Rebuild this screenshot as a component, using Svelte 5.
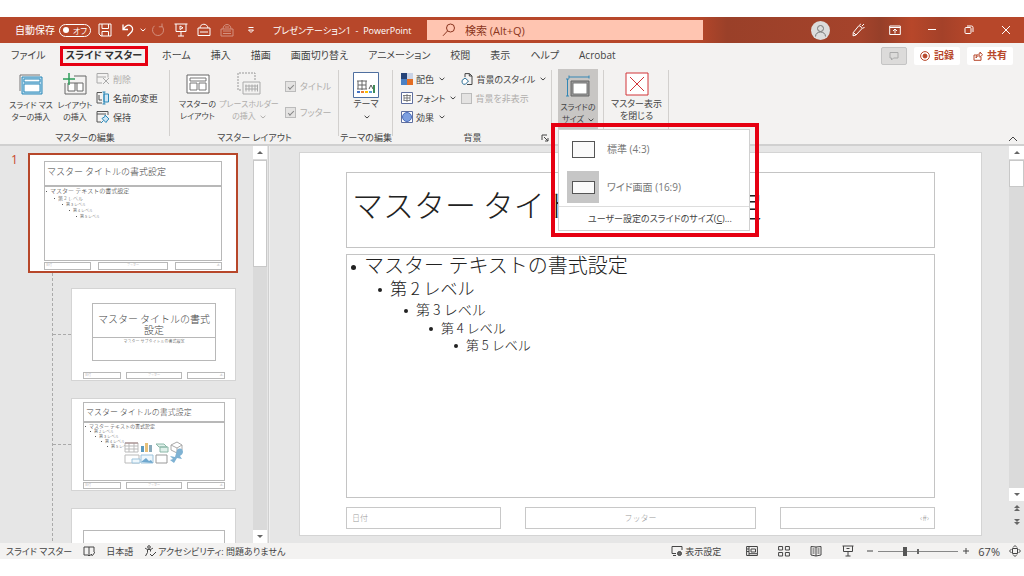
<script>
    const tabs = ['ファイル', 'スライド マスター', 'ホーム', '挿入', '描画', '画面切り替え', 'アニメーション', '校閲', '表示', 'ヘルプ', 'Acrobat'];
    const levels = ['マスター テキストの書式設定', '第 2 レベル', '第 3 レベル', '第 4 レベル', '第 5 レベル'];

    let activeTab = $state('スライド マスター');
    let menuOpen = $state(true);
    let size = $state('wide');
    let zoom = $state(32);
</script>

{#snippet chevron()}
    <svg class="chevron" viewBox="0 0 6 4" width="6" height="4"><path d="M.6.8 3 3 5.4.8" /></svg>
{/snippet}

{#snippet levelList()}
    <ul class="levels">
        {#each levels as level, i}
            <li class="l{i + 1}">{level}</li>
        {/each}
    </ul>
{/snippet}

{#snippet footers()}
    <div class="footers">
        <span>日付</span>
        <span>フッター</span>
        <span>‹#›</span>
    </div>
{/snippet}

<div class="page">
    <header class="titlebar">
        <div class="quick">
            <span class="autosave">自動保存</span>
            <button class="toggle" role="switch" aria-checked="false" aria-label="自動保存"><i></i>オフ</button>
            <button class="save" aria-label="保存">
                <svg viewBox="0 0 14 14" width="14" height="14"><path d="M1 1h12v12H3l-2-2zM4 1v4.500h6.500V1M4 13V8.500h6.500V13" /></svg>
            </button>
            <button class="undo" aria-label="元に戻す">
                <svg viewBox="0 0 14 14" width="14" height="14"><path stroke-width="1.300" d="M2 1.500v5h5M2.300 6.200C5 2 8 1.500 10 3c2.500 2 2 5-.5 7L6.500 13" /></svg>
            </button>
            <button class="more" aria-label="元に戻すの一覧">{@render chevron()}</button>
            <button class="redo faded" aria-label="やり直し">
                <svg viewBox="0 0 14 14" width="14" height="14"><path d="M3.500 2.800a5.500 5.500 0 1 0 7.500.4M11 .5v3.300H7.800" /></svg>
            </button>
            <button aria-label="最初から開始">
                <svg viewBox="0 0 14 14" width="14" height="14"><path d="M.5 1h13M2 1v7.500h10V1M7 8.500V13M4 13h6M6 3v3.500L9 4.800z" /></svg>
            </button>
            <button aria-label="クイック印刷">
                <svg viewBox="0 0 14 14" width="14" height="14"><path d="M3 5c0-5 7.500-5 8 0M1 5h12v7.500H1zM3 9h8" /></svg>
            </button>
            <button class="faded" aria-label="ファイルの共有">
                <svg viewBox="0 0 14 14" width="14" height="14"><path d="M3 6c0-6 8-6 8 0M1 6h12v7H1zM3 8h8M3 10.500h8M5 4h4" /></svg>
            </button>
            <button class="customize" aria-label="クイック アクセス ツール バーのカスタマイズ">
                <svg viewBox="0 0 8 8" width="8" height="8"><path d="M1.500 1.500h5M1.500 4h5L4 6.500z" /></svg>
            </button>
            <h1>プレゼンテーション1&nbsp; -&nbsp; PowerPoint</h1>
        </div>
        <label class="search">
            <svg viewBox="0 0 14 14" width="14" height="14"><circle cx="8.500" cy="5" r="4" /><path d="M5.500 8 1 12.800" /></svg>
            <input type="search" placeholder="検索 (Alt+Q)" aria-label="検索" />
        </label>
        <div class="window-tools">
            <button class="avatar" aria-label="アカウント">
                <svg viewBox="0 0 19 19" width="19" height="19"><circle cx="9.500" cy="7.500" r="3" /><path d="M4.500 15.500c0-6 10-6 10 0" /></svg>
            </button>
            <button aria-label="描画ツール">
                <svg viewBox="0 0 14 14" width="14" height="14"><path d="M8 2.500 11.500 5 5 12l-3 .8.300-3.300zM2.500 9.500 5 12M9.500.8 9 2M13 1l-2 2M13.500 4.500 12 5" /></svg>
            </button>
            <button aria-label="リボンの表示オプション">
                <svg viewBox="0 0 12 12" width="12" height="12"><path d="M.7 2h10.600v8.500H.7zM.7 3.500h10.600M6 9.500V5.500M4 7l2-2 2 2" /></svg>
            </button>
            <button aria-label="最小化"><svg viewBox="0 0 10 10" width="10" height="10"><path d="M1 4.500h8" /></svg></button>
            <button aria-label="元に戻す (縮小)">
                <svg viewBox="0 0 10 10" width="10" height="10"><rect x="1" y="2.500" width="6" height="6" rx="1" /><path d="M3 1h4.500q1.500 0 1.500 1.500V7" /></svg>
            </button>
            <button aria-label="閉じる"><svg viewBox="0 0 10 10" width="10" height="10"><path d="m1 1 8 8M9 1 1 9" /></svg></button>
        </div>
    </header>

    <nav class="tabs">
        {#each tabs as tab}
            <button class:active={tab === activeTab} onclick={() => (activeTab = tab)}>{tab}</button>
        {/each}
        <div class="tab-actions">
            <button class="comment" aria-label="コメント">
                <svg viewBox="0 0 10 10" width="10" height="10"><path d="M1 1.500h8v5.500H4.500L2.500 9V7H1z" /></svg>
            </button>
            <button class="record">
                <svg viewBox="0 0 10 10" width="10" height="10"><circle cx="5" cy="5" r="4.400" /><circle cx="5" cy="5" r="2" fill="currentColor" /></svg>記録
            </button>
            <button class="share">
                <svg viewBox="0 0 10 10" width="10" height="10"><path d="M4 4H1v5.300h7V6M3 7c0-3 2-4 4-4V1l2.500 2.800L7 6.300V4.800C5 4.800 4 5 3 7z" /></svg>共有
            </button>
        </div>
    </nav>

    <section class="ribbon">
        <div class="group g-edit">
            <div class="items">
                <button class="big w-slide">
                    <svg viewBox="0 0 24 24" width="24" height="24"><path d="M1 18V2h20" stroke="#777" /><path d="M3 4h20v17H3z" fill="#b9dcef" stroke="#2b88b8" /><path d="M5 6h16v3H5zM5 11h16v8H5z" fill="#fff" stroke="#2b88b8" /></svg>
                    スライド マス<br />ターの挿入
                </button>
                <button class="big w-layout">
                    <svg viewBox="0 0 24 24" width="24" height="24"><path d="M11 3h12v18H2V10" stroke="#666" fill="none" /><path d="M5 10h15M5 10v8h7v-8M14 10v8h6v-8" stroke="#666" fill="#fff" /><path d="M6 0v12M0 6h12" stroke="#2e9e5b" stroke-width="1.500" /></svg>
                    レイアウト<br />の挿入
                </button>
                <div class="stack">
                    <button class="small" disabled>
                        <svg viewBox="0 0 14 14" width="14" height="14"><path d="M1 1.500h11v4M1 1.500V11h5M1 5h9" stroke="#aaa" /><path d="m7 6 6 6M13 6l-6 6" stroke="#aaa" /></svg>削除
                    </button>
                    <button class="small">
                        <svg viewBox="0 0 14 14" width="14" height="14"><path d="M6 1.500H1V12h5M3 4v5h3" stroke="#555" /><path d="M8 3h4.500v8H8z" stroke="#2b88b8" fill="#cfe6f4" /><path d="M6.500 1h3M8 1v12M6.500 13h3" stroke="#2b88b8" /></svg>名前の変更
                    </button>
                    <button class="small">
                        <svg viewBox="0 0 14 14" width="14" height="14"><path d="M12 5V1.500H1V12h4M1 4h9" stroke="#555" /><path d="m9 5 4 4-1 .5-2 3-4-4 3-2zM7.500 10.500 5 13" stroke="#2b88b8" fill="#cfe6f4" /></svg>保持
                    </button>
                </div>
            </div>
            <h2>マスターの編集</h2>
        </div>

        <div class="group g-layout">
            <div class="items">
                <button class="big w-master">
                    <svg viewBox="0 0 24 24" width="24" height="24"><path d="M1 3h22v18H1z" stroke="#666" fill="#fff" /><path d="M4 6h16v3H4zM4 11h7v7H4zM13 11h7v7h-7z" stroke="#777" fill="#fff" /></svg>
                    マスターの<br />レイアウト
                </button>
                <button class="big w-holder" disabled>
                    <svg viewBox="0 0 24 24" width="24" height="24"><path d="M18 8V1H1v17h4" stroke="#999" stroke-dasharray="2 1" /><path d="M6 10h17v12H6zM9 12.500v7M12 12.500v7M15 12.500v7M18 12.500v7M20.500 12.500v7M8 14h13M8 17h13" stroke="#aaa" /></svg>
                    プレースホルダー<br />の挿入 {@render chevron()}
                </button>
                <div class="checks">
                    <label><input type="checkbox" checked disabled />タイトル</label>
                    <label><input type="checkbox" checked disabled />フッター</label>
                </div>
            </div>
            <h2>マスター レイアウト</h2>
        </div>

        <div class="group g-theme">
            <div class="items">
                <button class="big">
                    <svg viewBox="0 0 26 26" width="26" height="26"><path d="M.5.5h25v25H.5z" stroke="#4f6f9f" fill="#fff" /><path d="M4 9h10M4 17h10M5 9v8M9 8v10M13 9v8M5 13h8" stroke="#666" /><path d="m16 17 2-4 2 4" stroke="#555" /><path d="M4 20h3" stroke="#4472c4" stroke-width="2" /><path d="M8 20h3" stroke="#ed7d31" stroke-width="2" /><path d="M12 20h3" stroke="#ffc000" stroke-width="2" /><path d="M16 20h3" stroke="#5b9bd5" stroke-width="2" /><path d="M21 13v8" stroke="#3d8b57" stroke-width="2" /></svg>
                    テーマ<br />{@render chevron()}
                </button>
            </div>
            <h2>テーマの編集</h2>
        </div>

        <div class="group g-back">
            <div class="items">
                <div class="stack">
                    <button class="small">
                        <svg viewBox="0 0 12 12" width="12" height="12"><path d="M0 0h6v12H0z" fill="#264478" stroke="none" /><path d="M6 0h6v6H6z" fill="#c9d3e6" stroke="none" /><path d="M6 6h6v6H6z" fill="#e36c22" stroke="none" /><path d="M0 6h6v6H0z" fill="#4a80c4" stroke="none" /></svg>配色 {@render chevron()}
                    </button>
                    <button class="small">
                        <svg viewBox="0 0 12 12" width="12" height="12"><path d="M.5.5h11v11H.5z" stroke="#5f6f9f" fill="#fff" /><path d="M2 3.500h8M2.500 8.500h7M3 3.500v5M6 2v8M9 3.500v5M3 6h6" stroke="#666" stroke-width=".8" /></svg>フォント {@render chevron()}
                    </button>
                    <button class="small">
                        <svg viewBox="0 0 12 12" width="12" height="12"><path d="M.5.5h11v11H.5z" stroke="#5f6f9f" fill="#fff" /><circle cx="6" cy="6" r="4.500" fill="#7d9fe0" stroke="#4a6dbb" /></svg>効果 {@render chevron()}
                    </button>
                </div>
                <div class="stack">
                    <button class="small">
                        <svg viewBox="0 0 12 12" width="12" height="12"><path d="M4 4V.6h4.500L11 3v8.500H6M8.300.8V3H11" stroke="#444" /><path d="M1 7.500 4 5l3.500 3-3 3.200c-3 .6-3.500-1-3.500-3.700z" stroke="#2b6f98" fill="#fff" /></svg>背景のスタイル {@render chevron()}
                    </button>
                    <label class="hide-bg"><input type="checkbox" disabled />背景を非表示</label>
                </div>
            </div>
            <h2>背景</h2>
            <button class="launcher" aria-label="背景の書式設定">
                <svg viewBox="0 0 8 8" width="8" height="8"><path d="M1 6V1h5M3 3l4 4M7 4v3H4" /></svg>
            </button>
        </div>

        <div class="group g-size">
            <button class="big size-button" class:open={menuOpen} aria-expanded={menuOpen} onclick={() => (menuOpen = !menuOpen)}>
                <svg viewBox="0 0 24 24" width="24" height="24"><path d="M5 6h18v15H5z" stroke="#666" fill="#999" /><path d="M7 8h14v11H7z" fill="#fff" stroke="#777" /><path d="M3 2h20M3 .5v3M23 .5v3M1.500 4v17M0 4h3M0 21h3" stroke="#3487b5" /></svg>
                スライドの<br />サイズ {@render chevron()}
            </button>
            {#if menuOpen}
                <div class="callout">
                    <div class="menu" role="menu">
                        <button role="menuitemradio" aria-checked={size === 'standard'} onclick={() => (size = 'standard')}>
                            <span class="ratio"><i class="standard"></i></span>標準 (4:3)
                        </button>
                        <button role="menuitemradio" aria-checked={size === 'wide'} onclick={() => (size = 'wide')}>
                            <span class="ratio"><i></i></span>ワイド画面 (16:9)
                        </button>
                        <button class="custom" role="menuitem">ユーザー設定のスライドのサイズ(<u>C</u>)...</button>
                    </div>
                </div>
            {/if}
        </div>

        <div class="group g-close">
            <button class="big">
                <svg viewBox="0 0 24 24" width="24" height="24"><path d="M1 1h22v22H1z" stroke="#d13438" fill="#fff" /><path d="m5 5 14 14M19 5 5 19" stroke="#d13438" /></svg>
                マスター表示<br />を閉じる
            </button>
        </div>
        <button class="collapse" aria-label="リボンを折りたたむ">
            <svg viewBox="0 0 10 6" width="10" height="6"><path d="m1 5 4-4 4 4" /></svg>
        </button>
    </section>

    <main class="workspace">
        <aside class="thumbs">
            <div class="thumb-list">
                <div class="master-row">
                    <span class="number">1</span>
                    <div class="mini master">
                        <div class="box title">マスター タイトルの書式設定</div>
                        <div class="box body">{@render levelList()}</div>
                        {@render footers()}
                    </div>
                </div>
                <ul class="layouts">
                    <li>
                        <div class="mini cover">
                            <div class="box title">マスター タイトルの書式設定</div>
                            <div class="box body">マスター サブタイトルの書式設定</div>
                            {@render footers()}
                        </div>
                    </li>
                    <li>
                        <div class="mini content">
                            <div class="box title">マスター タイトルの書式設定</div>
                            <div class="box body">
                                {@render levelList()}
                                <svg class="content-icons" viewBox="0 0 60 24" width="60" height="24">
                                    <path d="M1 2h13v9H1zM5 2v9M10 2v9M1 5h13M1 8h13M1 14h14v8H1z" stroke="#bbb" fill="#fff" />
                                    <path d="M1 2h13" stroke="#a08080" />
                                    <path d="M17 5h3v6h-3z" fill="#5b9bbf" stroke="none" /><path d="M21 2h3v9h-3z" fill="#e6c07a" stroke="none" /><path d="M25 4h3v7h-3z" fill="#8ab" stroke="none" />
                                    <path d="M32 3h8l3 3h-8zM36 6h8v5h-8z" stroke="#8cb8a8" fill="#dff0ea" />
                                    <path d="m47 4 6-3 5 3v5l-5 3-6-3zM47 4l6 3 5-3M53 7v5" stroke="#aaa" fill="#fff" />
                                    <path d="M8 18h8v4H8zM17 14h12v8H17z" stroke="#9cc3dc" fill="#eef7fc" /><path d="m17 21 5-4 3 3 2-1 2 3z" fill="#6fa8cf" stroke="none" />
                                    <path d="M32 14h11v8H32z" stroke="#999" fill="#fff" />
                                    <path d="M53 9c3-3 6-1 6 2 0 2-2 3-3 4l2 3-5-1-3 5-4-3 3-1-3-3 5 1z" fill="#7fb2d3" stroke="none" />
                                </svg>
                            </div>
                            {@render footers()}
                        </div>
                    </li>
                    <li>
                        <div class="mini section"><div class="box body"></div></div>
                    </li>
                </ul>
            </div>
            <div class="scrollbar">
                <button aria-label="上へ"><i class="up"></i></button>
                <div class="track"><div class="grip"></div></div>
                <button aria-label="下へ"><i class="down"></i></button>
            </div>
        </aside>

        <div class="editor">
            <article class="slide">
                <div class="box title">マスター タイトルの書式設定</div>
                <div class="box body">{@render levelList()}</div>
                {@render footers()}
            </article>
        </div>
        <div class="scrollbar main-scroll">
            <button aria-label="上へ"><i class="up"></i></button>
            <div class="track"><div class="grip"></div></div>
            <button aria-label="下へ"><i class="down"></i></button>
            <button class="jump" aria-label="前のスライド"><i class="up"></i><i class="up"></i></button>
            <button class="jump" aria-label="次のスライド"><i class="down"></i><i class="down"></i></button>
        </div>
    </main>

    <footer class="status">
        <span>スライド マスター</span>
        <button aria-label="スペル チェック">
            <svg viewBox="0 0 12 12" width="12" height="12"><path d="M6 2v9M6 2H1v8h4l1 1 1-1h2M6 2h5v5M8 9l1.500 1.500L12 7" /></svg>
        </button>
        <button>日本語</button>
        <button class="a11y">
            <svg viewBox="0 0 12 12" width="12" height="12"><circle cx="5" cy="2" r="1.300" /><path d="M1 3c2 2 6 2 8 0M3.500 4.500v3L1.500 11M6.500 4.500v2M6 9l2 2 4-4" /></svg>アクセシビリティ: 問題ありません
        </button>
        <div class="views">
            <button class="display">
                <svg viewBox="0 0 12 12" width="12" height="12"><path d="M5 8.500H1v-7h10V5M2 10.500h3" /><circle cx="8.500" cy="8.500" r="2" fill="#666" /></svg>表示設定
            </button>
            <button aria-label="標準"><svg viewBox="0 0 12 12" width="12" height="12"><path d="M.6 1.500h10.800v9H.6zM3 1.500v9M5 4h4.500v3H5zM3 8.700h8M1 4h2M1 6.500h2" /></svg></button>
            <button aria-label="スライド一覧"><svg viewBox="0 0 12 12" width="12" height="12"><path d="M.6 1.500h4v3.500h-4zM7.400 1.500h4v3.500h-4zM.6 7.500h4V11h-4zM7.400 7.500h4V11h-4z" /></svg></button>
            <button aria-label="閲覧表示"><svg viewBox="0 0 12 12" width="12" height="12"><path d="M6 2v9M6 2 1 1.500V10l5 1 5-1V1.500zM2.500 4h2M2.500 6h2M2.500 8h2M7.500 4h2M7.500 6h2M7.500 8h2" /></svg></button>
            <button aria-label="スライド ショー"><svg viewBox="0 0 12 12" width="12" height="12"><path d="M.5 1h11M1.500 1v5.500h9V1M6 6.500V11M3.500 11h5M4.500 3.500h3" /></svg></button>
        </div>
        <div class="zoom">
            <button aria-label="縮小"><svg viewBox="0 0 6 6" width="6" height="6"><path d="M0 3h6" /></svg></button>
            <input type="range" min="0" max="100" bind:value={zoom} aria-label="ズーム" />
            <button aria-label="拡大"><svg viewBox="0 0 6 6" width="6" height="6"><path d="M0 3h6M3 0v6" /></svg></button>
            <span>67%</span>
            <button aria-label="ウィンドウに合わせる">
                <svg viewBox="0 0 12 12" width="12" height="12"><path d="M3.500 3.500h5v5h-5zM4 2.500l2-2 2 2M4 9.500l2 2 2-2M2.500 4l-2 2 2 2M9.500 4l2 2-2 2" /></svg>
            </button>
        </div>
    </footer>
</div>

<style>
    :global(body){
        margin: 0;
        background: #fff;
    }

    .page{
        display: flex;
        flex-direction: column;
        height: 100vh;
        box-sizing: border-box;
        padding: 17px 0;
        overflow: hidden;
        font-family: "Open Sans", "Noto Sans CJK JP", sans-serif;
        font-feature-settings: "palt";
        font-size: 9px;
        line-height: 13px;
        color: #444;
    }

    button, input{
        font: inherit;
        font-feature-settings: inherit;
        color: inherit;
        background: none;
        border: 0;
        padding: 0;
        margin: 0;
    }

    button{
        display: flex;
        align-items: center;
        justify-content: center;
        white-space: nowrap;
    }

    svg{
        flex: none;
        fill: none;
        stroke: currentColor;
        stroke-width: 1;
    }

    ul{
        list-style: none;
        margin: 0;
        padding: 0;
    }

    h1, h2{
        margin: 0;
        font-size: inherit;
        font-weight: 400;
    }

    .chevron{
        vertical-align: middle;
        margin-left: 2px;
    }

    /* title bar */
    .titlebar{
        display: grid;
        grid-template-columns: 427px 27% 1fr;
        align-items: center;
        height: 26px;
        flex: none;
        font-size: 10px;
        color: #fff;
        background: linear-gradient(90deg, #b7472a 68%, #9a4029 71%, #a5432b 84%, #963f29 86%, #b7472a 89%, #a44129 92%, #b7472a 95%);
    }

    .quick{
        display: flex;
        align-items: center;
        padding-left: 15px;
        white-space: nowrap;
    }

    .quick h1{
        font-size: 9px;
    }

    .quick button{
        margin-right: 9px;
    }

    .quick .toggle{
        width: 32px;
        height: 13px;
        box-sizing: border-box;
        margin: 0 7px 0 4px;
        gap: 4px;
        border: 1px solid #fff;
        border-radius: 7px;
        font-size: 8px;
    }

    .toggle i{
        width: 6px;
        height: 6px;
        border-radius: 50%;
        background: #fff;
    }

    .quick .undo{
        margin-right: 3px;
    }

    .quick .more{
        margin-right: 5px;
    }

    .faded{
        opacity: .4;
    }

    .quick .customize{
        margin: 0 18px 0 4px;
    }

    .search{
        display: flex;
        align-items: center;
        height: 20px;
        padding-left: 15px;
        gap: 9px;
        background: #ffc5b1;
        color: #8a3520;
    }

    .search input{
        flex: 1;
        min-width: 0;
        font-size: 11px;
        outline: 0;
    }

    .search input::placeholder{
        color: #8a3520;
        opacity: 1;
    }

    .window-tools{
        display: flex;
        align-items: center;
        justify-content: flex-end;
    }

    .window-tools button{
        width: 37px;
    }

    .avatar svg{
        border-radius: 50%;
        background: #dcdcdc;
        color: #777;
    }

    /* tabs */
    .tabs{
        display: flex;
        align-items: center;
        flex: none;
        height: 25px;
        padding-left: 8px;
        gap: 14px;
        background: #f3f2f1;
        font-size: 10px;
    }

    .tabs > button{
        height: 14px;
        padding: 0 3px;
    }

    .tabs > .active{
        font-weight: 700;
        outline: 3px solid #e60012;
        color: #333;
    }

    .tab-actions{
        display: flex;
        gap: 7px;
        margin-left: auto;
        padding-right: 11px;
        color: #b7472a;
        font-weight: 700;
    }

    .tab-actions button{
        width: 46px;
        height: 18px;
        gap: 4px;
        background: #fff;
        border-radius: 2px;
    }

    .tab-actions .comment{
        width: 26px;
        box-sizing: border-box;
        background: #dcdbda;
        border: 1px solid #c4c4c4;
        color: #aaa;
    }

    /* ribbon */
    .ribbon{
        display: flex;
        flex: none;
        height: 76px;
        position: relative;
        background: #f3f2f1;
        border-bottom: 2px solid #d0d0d0;
    }

    .group{
        display: flex;
        flex-direction: column;
        justify-content: space-between;
        position: relative;
        box-sizing: border-box;
        flex: none;
        padding-top: 4px;
    }

    .group::after{
        content: "";
        position: absolute;
        right: 0;
        top: 2px;
        bottom: 8px;
        border-right: 1px solid #d2d0ce;
    }

    .g-edit{
        width: 170px;
    }

    .g-layout{
        width: 169px;
    }

    .g-theme{
        width: 54px;
    }

    .g-back{
        width: 159px;
    }

    .g-size{
        width: 52px;
        padding: 1px 6px 0;
    }

    .g-close{
        width: 65px;
    }

    .items{
        display: flex;
        justify-content: center;
    }

    .g-edit .items, .g-back .items, .g-layout .items{
        justify-content: flex-start;
        padding-left: 8px;
    }

    h2{
        text-align: center;
        white-space: nowrap;
    }

    .big{
        display: block;
        text-align: center;
        font-size: 8px;
        line-height: 12px;
    }

    .g-theme .big, .g-close .big{
        font-size: 9px;
    }

    .big > svg:first-child{
        display: block;
        margin: 0 auto 2px;
    }

    .g-theme .big > svg:first-child{
        margin-bottom: 0;
    }

    .w-slide{
        width: 46px;
    }

    .w-layout{
        width: 42px;
    }

    .w-master{
        width: 39px;
    }

    .w-holder{
        width: 64px;
    }

    .stack{
        display: flex;
        flex-direction: column;
        align-items: flex-start;
        gap: 5px;
    }

    .g-back .stack + .stack{
        padding-left: 5px;
    }

    .small, .hide-bg{
        display: flex;
        align-items: center;
        height: 14px;
        gap: 3px;
        white-space: nowrap;
    }

    button:disabled, .checks, .hide-bg{
        color: #b0aeac;
    }

    .checks{
        display: flex;
        flex-direction: column;
        gap: 13px;
        padding: 8px 0 0 4px;
    }

    .checks label{
        display: flex;
        align-items: center;
        gap: 4px;
        white-space: nowrap;
    }

    input[type="checkbox"]{
        appearance: none;
        box-sizing: border-box;
        width: 11px;
        height: 11px;
        border: 1px solid #bbb;
        background: #e4e3e2;
        display: grid;
        place-items: center;
    }

    input[type="checkbox"]:checked::before{
        content: "";
        width: 5px;
        height: 2px;
        border: solid #888;
        border-width: 0 0 1px 1px;
        transform: rotate(-45deg);
    }

    .launcher{
        position: absolute;
        right: 3px;
        bottom: 2px;
    }

    .size-button{
        width: 40px;
        height: 60px;
    }

    .size-button.open{
        background: #c8c6c4;
    }

    .size-button > svg:first-child{
        margin-top: 2px;
    }

    .collapse{
        position: absolute;
        right: 6px;
        bottom: 2px;
    }

    .callout{
        position: absolute;
        z-index: 2;
        left: -1px;
        top: 55px;
        border: 4px solid #e60012;
        padding: 2px 5px 2px 3px;
    }

    .menu{
        width: 192px;
        box-sizing: border-box;
        border: 1px solid #d0d0d0;
        background: #fff;
        font-size: 10px;
        color: #777;
    }

    .menu button{
        width: 100%;
        height: 38px;
        padding-left: 8px;
        gap: 8px;
        justify-content: flex-start;
    }

    .menu .custom{
        height: 24px;
        gap: 0;
        padding-left: 29px;
        border-top: 1px solid #ddd;
        font-size: 9px;
        color: #444;
    }

    .ratio{
        display: grid;
        place-items: center;
        width: 32px;
        height: 32px;
    }

    .ratio i{
        width: 21px;
        height: 11px;
        border: 1px solid #555;
        background: #fafafa;
    }

    .ratio .standard{
        height: 15px;
    }

    [aria-checked="true"] .ratio{
        background: #c6c6c6;
    }

    /* workspace */
    .workspace{
        display: flex;
        flex: 1;
        min-height: 0;
        background: #e6e6e6;
    }

    .thumbs{
        display: flex;
        flex: none;
        width: 269px;
        box-sizing: border-box;
        border-right: 1px solid #d0d0d0;
    }

    .thumb-list{
        flex: 1;
        overflow: hidden;
        padding-top: 7px;
    }

    .master-row{
        display: flex;
    }

    .number{
        width: 17px;
        padding-left: 11px;
        font-size: 12px;
        color: #c8472a;
    }

    .box{
        border: 1px solid #c4c4c4;
        box-sizing: border-box;
    }

    .slide, .mini{
        display: flex;
        flex-direction: column;
        box-sizing: border-box;
        background: #fff;
        border: 1px solid #d4d4d4;
        font-family: "Noto Sans CJK JP", sans-serif;
        font-feature-settings: normal;
        font-weight: 300;
    }

    .mini{
        width: 165px;
        height: 93px;
        padding: 3px 10px 1px 11px;
    }

    .mini .box{
        border-color: #b8b8b8;
    }

    .mini .title{
        height: 20px;
        padding-left: 2px;
        font-size: 8px;
        line-height: 17px;
        white-space: nowrap;
    }

    .mini .body{
        flex: 1;
        min-height: 0;
        position: relative;
    }

    .mini.master{
        width: 210px;
        height: 120px;
        padding: 6px 14px 1px;
        border: 2px solid #b7472a;
    }

    .master .title{
        height: 25px;
        font-size: 9px;
        line-height: 20px;
    }

    .levels li::before{
        content: "";
        display: inline-block;
        vertical-align: middle;
        border-radius: 50%;
        background: #222;
    }

    .mini .levels{
        font-size: 4px;
        line-height: 5px;
        color: #555;
    }

    .mini .levels li{
        white-space: nowrap;
    }

    .mini .levels li::before{
        width: 1px;
        height: 1px;
        margin: 0 3px 0 1px;
    }

    .mini .l1{
        font-size: 5px;
        line-height: 6px;
        color: #222;
    }

    .master .levels{
        line-height: 6px;
    }

    .master .l1{
        font-size: 6px;
        line-height: 8px;
    }

    .mini .l2{
        padding-left: 5px;
    }

    .mini .l3{
        padding-left: 10px;
    }

    .mini .l4{
        padding-left: 16px;
    }

    .mini .l5{
        padding-left: 22px;
    }

    .master .l2{
        padding-left: 8px;
        font-size: 5px;
    }

    .master .l3{
        padding-left: 16px;
    }

    .master .l4{
        padding-left: 23px;
    }

    .master .l5{
        padding-left: 30px;
    }

    .footers{
        display: grid;
        grid-template-columns: 155fr 231fr 155fr;
    }

    .footers span{
        box-sizing: border-box;
        border: 1px solid #c8c8c8;
        color: #999;
    }

    .footers span:nth-child(2){
        text-align: center;
    }

    .footers span:last-child{
        text-align: right;
    }

    .mini .footers{
        column-gap: 5px;
        margin-top: 1px;
        font-size: 3px;
        line-height: 4px;
    }

    .mini .footers span{
        height: 7px;
        padding: 0 1px;
        border-color: #b8b8b8;
    }

    .master .footers{
        column-gap: 7px;
    }

    .master .footers span{
        height: 8px;
    }

    .layouts{
        margin-left: 52px;
        padding: 15px 0 0 18px;
        border-left: 1px dashed #aaa;
    }

    .layouts > li{
        position: relative;
        margin-bottom: 17px;
    }

    .layouts > li::before{
        content: "";
        position: absolute;
        left: -18px;
        top: 46px;
        width: 18px;
        border-top: 1px dashed #aaa;
    }

    .cover{
        padding-top: 14px;
    }

    .cover .title, .cover .body{
        margin: 0 9px;
        padding: 0;
        text-align: center;
        white-space: normal;
    }

    .cover .title{
        height: 34px;
        padding-top: 9px;
        font-size: 10px;
        line-height: 11px;
        border-bottom: 0;
    }

    .cover .body{
        flex: 0 0 24px;
        font-size: 4px;
        line-height: 6px;
    }

    .cover .footers{
        margin-top: auto;
    }

    .content-icons{
        position: absolute;
        left: 40px;
        top: 18px;
    }

    .section{
        padding-top: 21px;
    }

    .scrollbar{
        display: flex;
        flex-direction: column;
        flex: none;
        width: 14px;
        margin-right: 1px;
        background: #dadada;
    }

    .scrollbar button{
        flex-direction: column;
        height: 13px;
        background: #fff;
    }

    .scrollbar i{
        border: 3px solid transparent;
        border-top-width: 0;
        border-bottom: 3px solid #666;
    }

    .scrollbar .down{
        border-bottom-width: 0;
        border-top: 3px solid #666;
    }

    .track{
        flex: 1;
        padding-top: 1px;
    }

    .grip{
        height: 29%;
        box-sizing: border-box;
        background: #fff;
        border: 1px solid #c8c8c8;
    }

    .main-scroll{
        width: 15px;
        margin: 0;
        background: linear-gradient(#dadada 88%, #e6e6e6 88%);
    }

    .main-scroll .grip{
        height: 27px;
    }

    .scrollbar .jump{
        height: 14px;
        background: #e6e6e6;
    }

    .main-scroll .jump:last-child{
        margin-bottom: 14px;
    }

    .editor{
        flex: 1;
        min-width: 0;
        padding: 6px 27px 0 29px;
        border-left: 1px solid #f0f0f0;
    }

    .slide{
        aspect-ratio: 16 / 9;
        padding: 19px 46px 6px;
        color: #222;
    }

    .slide > .title{
        height: 76px;
        padding-left: 5px;
        font-size: 31px;
        line-height: 62px;
        white-space: nowrap;
    }

    .slide > .body{
        flex: 1;
        margin: 6px 0 9px;
    }

    .slide .levels{
        font-size: 13px;
        line-height: 17px;
    }

    .slide .levels li::before{
        width: 4px;
        height: 4px;
        margin-right: 8px;
    }

    .slide .levels .l1{
        padding-left: 4px;
        font-size: 20px;
        line-height: 20px;
    }

    .slide .levels .l1::before{
        width: 5px;
        height: 5px;
    }

    .slide .levels .l2{
        padding-left: 31px;
        font-size: 17px;
        line-height: 25px;
    }

    .slide .levels .l3{
        padding-left: 57px;
        font-size: 14px;
        line-height: 19px;
    }

    .slide .levels .l4{
        padding-left: 82px;
    }

    .slide .levels .l5{
        padding-left: 107px;
    }

    .slide > .footers{
        column-gap: 24px;
        font-size: 8px;
        line-height: 20px;
    }

    .slide > .footers span{
        padding: 0 5px;
    }

    /* status bar */
    .status{
        display: flex;
        align-items: center;
        flex: none;
        height: 16px;
        padding: 0 3px 0 6px;
        gap: 11px;
        background: #f3f2f1;
        white-space: nowrap;
    }

    .a11y, .display{
        gap: 2px;
    }

    .views{
        display: flex;
        gap: 20px;
        margin: 0 2px 0 auto;
    }

    .display{
        margin-right: 5px;
    }

    .zoom{
        display: flex;
        align-items: center;
        gap: 5px;
        font-size: 11px;
    }

    .zoom span{
        margin: 0 4px;
    }

    .zoom input{
        appearance: none;
        width: 80px;
        height: 12px;
        background:
            linear-gradient(#666, #666) center / 2px 5px no-repeat,
            linear-gradient(#888, #888) center / 100% 1px no-repeat;
    }

    .zoom input::-webkit-slider-thumb{
        appearance: none;
        width: 4px;
        height: 9px;
        background: #555;
    }
</style>
